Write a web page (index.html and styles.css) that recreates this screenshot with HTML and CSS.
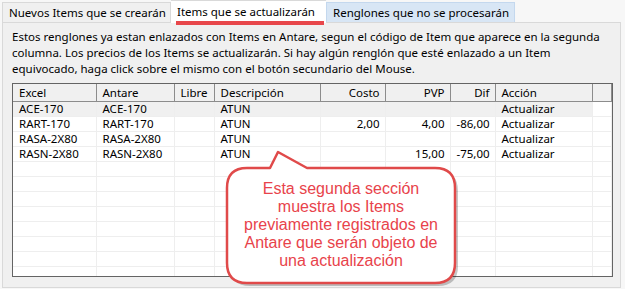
FILE: index.html
```html
<!DOCTYPE html>
<html lang="es">
<head>
  <meta charset="UTF-8" />
  <title>Items que se actualizarán</title>
  <link rel="stylesheet" href="styles.css">
</head>
<body>
  <div class="window">
    <div class="tabs">
      <div class="tab">Nuevos Items que se crearán</div>
      <div class="tab active">Items que se actualizarán</div>
      <div class="tab hover">Renglones que no se procesarán</div>
    </div>

    <div class="panel">
      <p class="intro">
        Estos renglones ya estan enlazados con Items en Antare, segun el código de Item que aparece en la segunda<br>
        columna. Los precios de los Items se actualizarán. Si hay algún renglón que esté enlazado a un Item<br>
        equivocado, haga click sobre el mismo con el botón secundario del Mouse.
      </p>

      <div class="grid">
        <table>
          <colgroup>
            <col class="c-excel"><col class="c-antare"><col class="c-libre"><col class="c-desc">
            <col class="c-num"><col class="c-num"><col class="c-dif"><col class="c-accion"><col>
          </colgroup>
          <thead>
            <tr>
              <th>Excel</th><th>Antare</th><th>Libre</th><th>Descripción</th>
              <th class="num">Costo</th><th class="num">PVP</th><th class="num">Dif</th><th>Acción</th><th></th>
            </tr>
          </thead>
          <tbody>
            <tr class="selected"><td>ACE-170</td><td>ACE-170</td><td></td><td>ATUN</td><td class="num"></td><td class="num"></td><td class="num"></td><td>Actualizar</td><td class="blank"></td></tr>
            <tr><td>RART-170</td><td>RART-170</td><td></td><td>ATUN</td><td class="num">2,00</td><td class="num">4,00</td><td class="num">-86,00</td><td>Actualizar</td><td></td></tr>
            <tr><td>RASA-2X80</td><td>RASA-2X80</td><td></td><td>ATUN</td><td class="num"></td><td class="num"></td><td class="num"></td><td>Actualizar</td><td></td></tr>
            <tr><td>RASN-2X80</td><td>RASN-2X80</td><td></td><td>ATUN</td><td class="num"></td><td class="num">15,00</td><td class="num">-75,00</td><td>Actualizar</td><td></td></tr>
            <tr><td></td><td></td><td></td><td></td><td></td><td></td><td></td><td></td><td></td></tr>
            <tr><td></td><td></td><td></td><td></td><td></td><td></td><td></td><td></td><td></td></tr>
            <tr><td></td><td></td><td></td><td></td><td></td><td></td><td></td><td></td><td></td></tr>
            <tr><td></td><td></td><td></td><td></td><td></td><td></td><td></td><td></td><td></td></tr>
            <tr><td></td><td></td><td></td><td></td><td></td><td></td><td></td><td></td><td></td></tr>
            <tr><td></td><td></td><td></td><td></td><td></td><td></td><td></td><td></td><td></td></tr>
            <tr><td></td><td></td><td></td><td></td><td></td><td></td><td></td><td></td><td></td></tr>
            <tr><td></td><td></td><td></td><td></td><td></td><td></td><td></td><td></td><td></td></tr>
          </tbody>
        </table>
      </div>
    </div>

    <!-- globo explicativo encima de la grilla -->
    <div class="callout">
      <svg class="callout-shape" width="250" height="150" viewBox="0 0 250 150">
        <path class="shadow" d="M24 20 L47 20 L55 4 L84 20 L212 20 Q232 20 232 40 L232 115 Q232 135 212 135 L24 135 Q4 135 4 115 L4 40 Q4 20 24 20 Z" transform="translate(3 3)"/>
        <path class="bubble" d="M24 20 L47 20 L55 4 L84 20 L212 20 Q232 20 232 40 L232 115 Q232 135 212 135 L24 135 Q4 135 4 115 L4 40 Q4 20 24 20 Z"/>
      </svg>
      <div class="callout-text">
        Esta segunda sección<br>
        muestra los Items<br>
        previamente registrados en<br>
        Antare que serán objeto de<br>
        una actualización
      </div>
    </div>
  </div>
</body>
</html>
```

FILE: styles.css
```css
* {
  margin: 0;
  padding: 0;
  box-sizing: border-box;
}

body {
  width: 625px;
  height: 289px;
  background: #f7f7f7;
  font-family: "Noto Sans", sans-serif;
  font-size: 11.5px;
  color: #000;
  overflow: hidden;
}

.window {
  position: relative;
  padding: 0 4px 1px 2px;
}

.tabs {
  display: flex;
  align-items: flex-end;
  height: 22px;
  position: relative;
  z-index: 1;
}

.tab {
  height: 20px;
  padding: 0 6px;
  line-height: 19px;
  border: 1px solid #d9d9d9;
  border-bottom: none;
  background: #f0f0f0;
  white-space: nowrap;
}

.tab:first-child {
  width: 169px;
}

.tab.active {
  width: 155px;
  height: 23px;
  margin-bottom: -1px;
  padding-top: 1px;
  background: #fff;
  border-left: none;
  border-right: none;
  position: relative;
}

.tab.active::after {
  content: "";
  position: absolute;
  left: 5px;
  right: 2px;
  top: 20px;
  height: 4px;
  background: #e8474b;
}

.tab.hover {
  width: 189px;
  background: #d8e6f5;
  border-color: #c4d8ee;
}

.panel {
  height: 266px;
  background: #f0f0f0;
  border: 1px solid #d9d9d9;
  padding: 6px 8px 0 9px;
}

.intro {
  line-height: 16px;
  white-space: nowrap;
  height: 54px;
}

.grid {
  width: 601px;
  height: 194px;
  background: #fff;
  border: 1px solid #646464;
  overflow: hidden;
}

table {
  border-collapse: collapse;
  table-layout: fixed;
  width: 599px;
}

.c-excel { width: 83px; }
.c-antare { width: 78px; }
.c-libre { width: 40px; }
.c-desc { width: 106px; }
.c-num { width: 65px; }
.c-dif { width: 45px; }
.c-accion { width: 97px; }

th {
  height: 17px;
  font-weight: normal;
  text-align: left;
  background: #f0f0f0;
  border-right: 1px solid #8c8c8c;
  border-bottom: 1px solid #8c8c8c;
  padding: 0 5px 0 6px;
  white-space: nowrap;
  overflow: hidden;
}

td {
  height: 15px;
  line-height: 14px;
  padding: 0 5px 0 6px;
  border-right: 1px solid #eeeeee;
  border-bottom: 1px solid #eeeeee;
  white-space: nowrap;
  overflow: hidden;
}

.num {
  text-align: right;
}

.selected td {
  background: #f0f0f0;
}

.selected td.blank {
  background: #fff;
}

.callout {
  position: absolute;
  left: 223px;
  top: 148px;
  width: 250px;
  height: 150px;
}

.callout-shape {
  display: block;
}

.shadow {
  fill: rgba(0, 0, 0, 0.22);
}

.bubble {
  fill: #fff;
  stroke: #e04a4a;
  stroke-width: 2.5;
  stroke-linejoin: round;
}

.callout-text {
  position: absolute;
  left: 4px;
  top: 32px;
  width: 228px;
  text-align: center;
  font-family: "Liberation Sans", Arial, sans-serif;
  font-size: 16px;
  line-height: 18px;
  color: #e8434b;
}
```
